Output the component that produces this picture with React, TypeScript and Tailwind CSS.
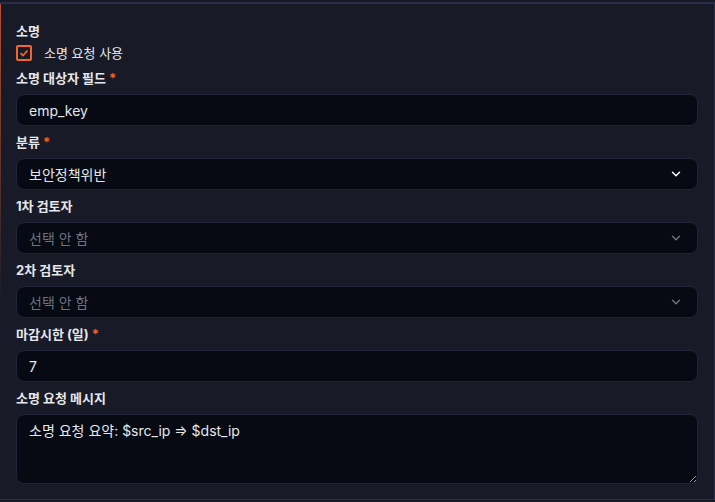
import { ChevronDown } from 'lucide-react';

const font = { fontFamily: 'Inter, "Noto Sans CJK KR", sans-serif' };

function Label({ text, required }: { text: string; required?: boolean }) {
  return (
    <div className="text-[13px] leading-5 font-bold text-[#e5e7eb] mb-[6px]">
      {text}
      {required && <span className="text-[#f0612a] ml-[3px]">*</span>}
    </div>
  );
}

const box =
  'w-full h-8 rounded-lg border border-[#1f2438] bg-[#070a12] px-3 text-[14px] text-[#e5e7eb] flex items-center';

function SelectBox({ value, placeholder }: { value?: string; placeholder?: string }) {
  return (
    <div className={box + ' justify-between'}>
      <span className={value ? 'text-[#e5e7eb]' : 'text-[#6b7280]'}>{value ?? placeholder}</span>
      <ChevronDown
        size={14}
        strokeWidth={2.5}
        className={value ? 'text-white mr-[2px]' : 'text-[#6b7280] mr-[2px]'}
      />
    </div>
  );
}

export default function App() {
  return (
    <div className="w-[715px] h-[502px] bg-[#161925] pt-[2px] overflow-hidden" style={font}>
      <div className="relative h-[498px] border-t-2 border-r border-b border-[#2a2d48] bg-[#181b27] px-4 pt-[17px]">
        <div className="absolute left-0 top-0 w-px h-[300px] bg-gradient-to-b from-[#b8502f] to-transparent" />
        <div className="text-[13px] leading-5 font-bold text-[#e5e7eb]">소명</div>
        <label className="flex items-center gap-3 mt-[2px] mb-[5px]">
          <span className="w-4 h-4 rounded-[2px] border-2 border-[#f2662b] flex items-center justify-center">
            <svg width="10" height="10" viewBox="0 0 10 10" fill="none">
              <path d="M1.5 5.2 L4 7.5 L8.5 2.5" stroke="#f2662b" strokeWidth="1.8" />
            </svg>
          </span>
          <span className="text-[13px] leading-5 text-[#e5e7eb]">소명 요청 사용</span>
        </label>

        <div className="flex flex-col gap-[6px]">
          <div>
            <Label text="소명 대상자 필드" required />
            <div className={box}>emp_key</div>
          </div>
          <div>
            <Label text="분류" required />
            <SelectBox value="보안정책위반" />
          </div>
          <div>
            <Label text="1차 검토자" />
            <SelectBox placeholder="선택 안 함" />
          </div>
          <div>
            <Label text="2차 검토자" />
            <SelectBox placeholder="선택 안 함" />
          </div>
          <div>
            <Label text="마감시한 (일)" required />
            <div className={box}>7</div>
          </div>
          <div>
            <Label text="소명 요청 메시지" />
            <textarea
              defaultValue="소명 요청 요약: $src_ip ⇒ $dst_ip"
              className="w-full h-[70px] rounded-lg border border-[#1f2438] bg-[#070a12] px-3 py-[6px] text-[14px] leading-5 text-[#e5e7eb] outline-none block"
              style={font}
            />
          </div>
        </div>
      </div>
    </div>
  );
}
